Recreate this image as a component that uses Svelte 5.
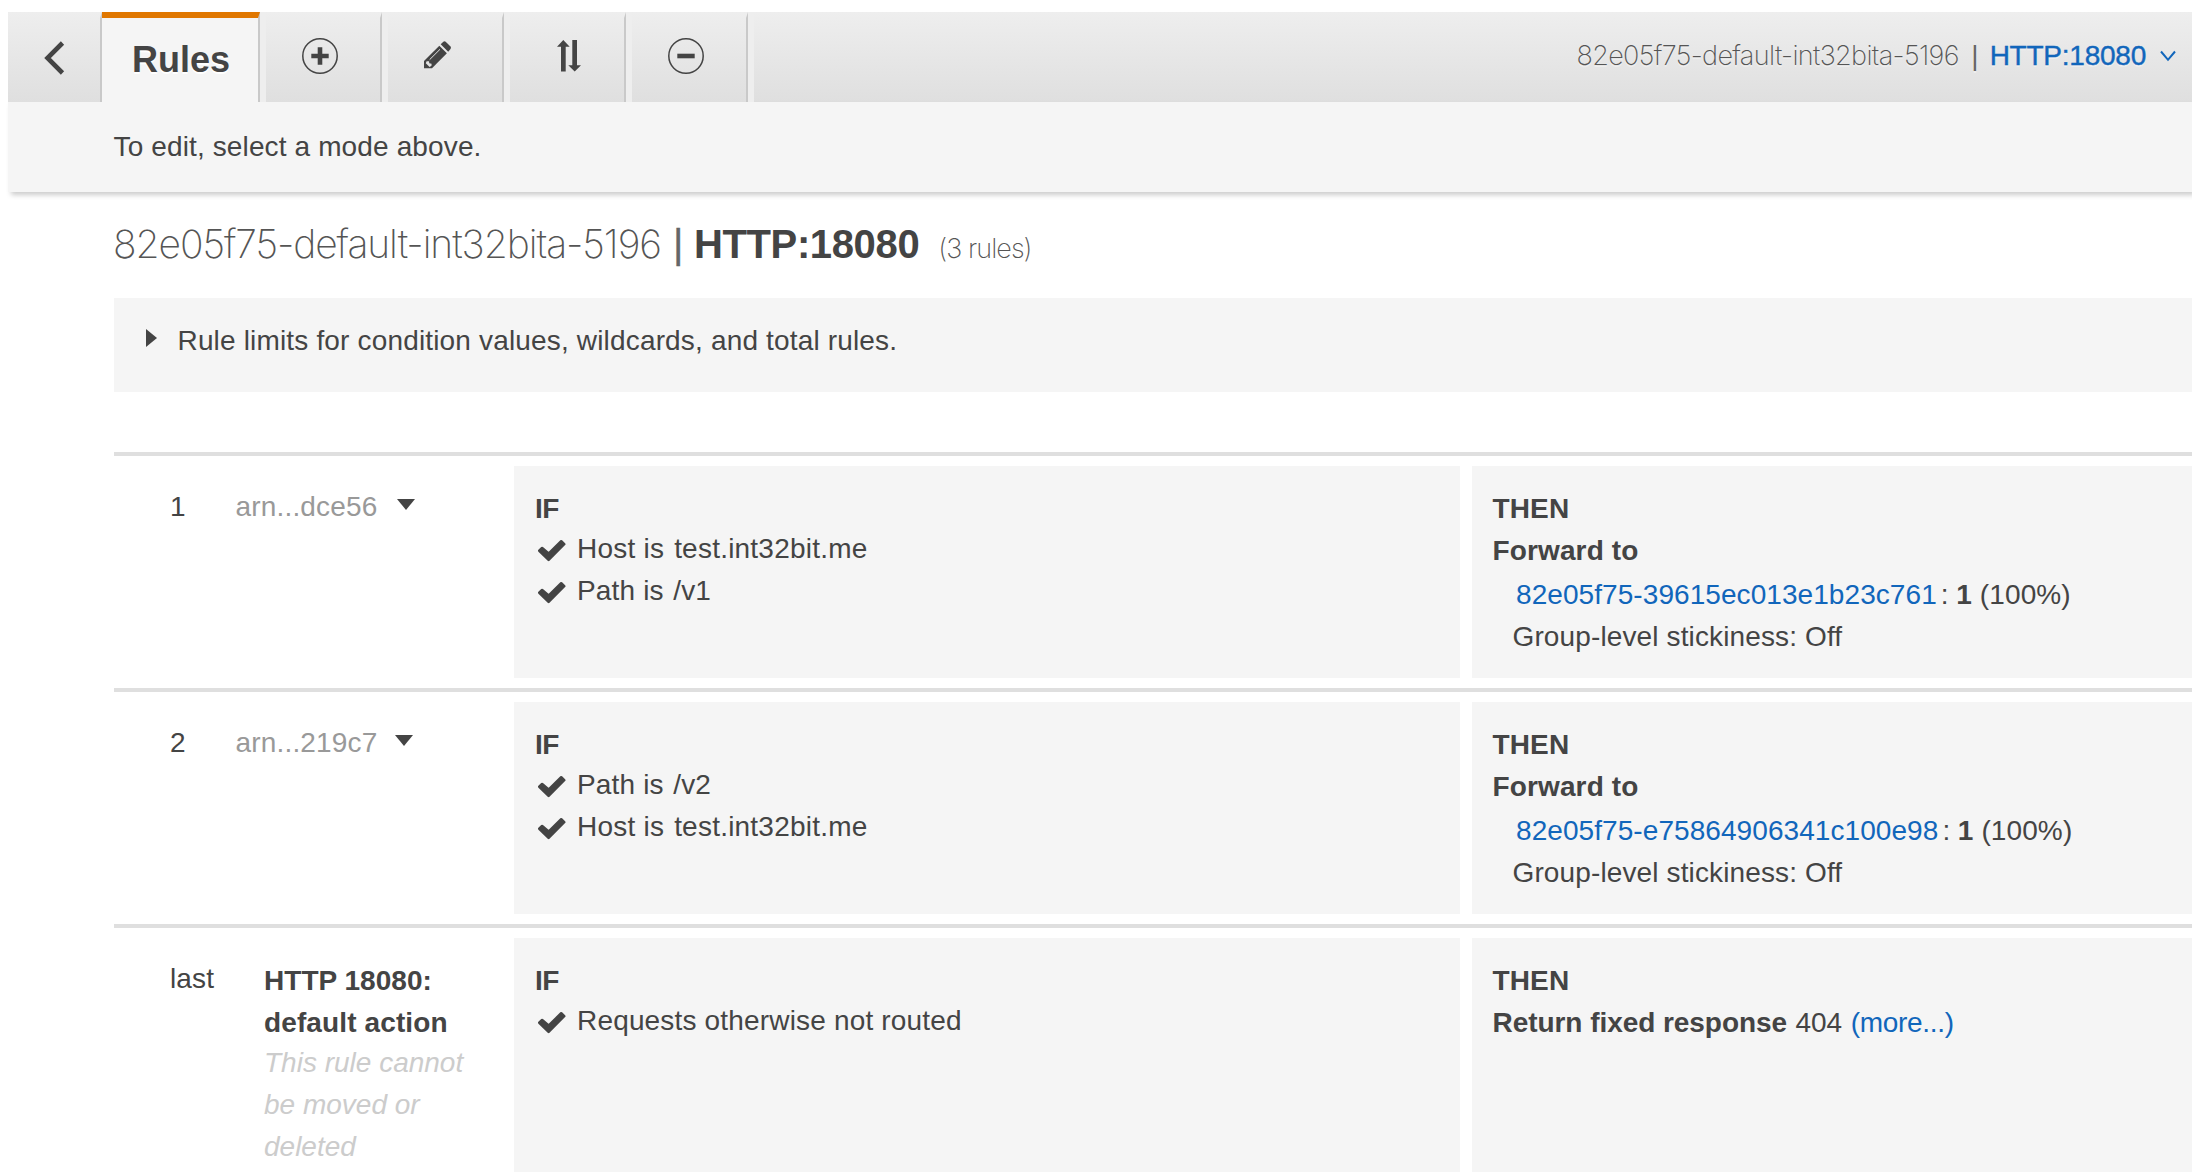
<script>
  const loadBalancer = '82e05f75-default-int32bita-5196';
  const listener = 'HTTP:18080';

  const rules = [
    {
      order: '1',
      arn: 'arn...dce56',
      conditions: [
        { label: 'Host is', value: 'test.int32bit.me', kind: 'host' },
        { label: 'Path is', value: '/v1', kind: 'path' }
      ],
      target: '82e05f75-39615ec013e1b23c761'
    },
    {
      order: '2',
      arn: 'arn...219c7',
      conditions: [
        { label: 'Path is', value: '/v2', kind: 'path' },
        { label: 'Host is', value: 'test.int32bit.me', kind: 'host' }
      ],
      target: '82e05f75-e75864906341c100e98'
    }
  ];
</script>

{#snippet check()}
  <svg class="check" viewBox="0 0 28 22" aria-hidden="true">
    <path d="M1.3 10.7 4.1 8 10.6 13.6 23.2 1.3 26.2 4.2 10.6 19.8Z" />
  </svg>
{/snippet}

<div class="page">
  <header class="toolbar">
    <nav class="tabs">
      <div class="tab back">
        <svg width="20" height="34" viewBox="0 0 20 34"><path d="M17.5 2 2.5 17l15 15" /></svg>
      </div>
      <div class="tab active">Rules</div>
      <div class="tab tool">
        <svg width="36" height="36" viewBox="0 0 36 36">
          <circle cx="18" cy="18" r="17.2" />
          <path class="bar" d="M9.3 18h17.4M18 9.3v17.4" />
        </svg>
      </div>
      <div class="tab tool pencil">
        <svg width="28" height="28" viewBox="0 0 28 28">
          <path class="fill" d="M0 20 15.3 4.7 22.9 12.2 8 27.3H0Z" />
          <path class="fill" d="M16.7 3.3 19.3.8q1.2-1 2.4 0L26.5 5.4q1 1.2 0 2.5L24.2 10.8Z" />
          <path class="light" d="M5.6 18.7 16 8.3" />
          <path class="cut" d="M2.6 20.2 5 20.3 5.3 22.3 7.6 22.7 7.5 24.8 5.6 26 1.8 22.2Z" />
        </svg>
      </div>
      <div class="tab tool sort">
        <svg width="24" height="32" viewBox="0 0 24 32">
          <path class="fill" d="M6.3 0 12.7 6.8H8.7V31.6H4V6.8H0Z" />
          <path class="fill" d="M17.7 31.6 11.3 25.2H15.3V0H20V25.2H24Z" />
        </svg>
      </div>
      <div class="tab tool">
        <svg width="36" height="36" viewBox="0 0 36 36">
          <circle cx="18" cy="18" r="17.2" />
          <path class="bar" d="M9.3 18h17.4" />
        </svg>
      </div>
    </nav>
    <div class="context">
      <span class="lb">{loadBalancer}</span>
      <span class="sep">|</span>
      <a class="listener">{listener}</a>
      <svg width="16" height="12" viewBox="0 0 16 12"><path d="M1 1.5 8 9.8 15 1.5" /></svg>
    </div>
  </header>

  <div class="hint">To edit, select a mode above.</div>

  <main>
    <h1>
      <span class="lb">{loadBalancer}</span>
      <span class="sep">|</span>
      <strong>{listener}</strong>
      <span class="count">(3 rules)</span>
    </h1>

    <div class="limits">
      <svg width="11" height="18" viewBox="0 0 11 18"><path d="M0 0 11 9 0 18Z" /></svg>
      <span>Rule limits for condition values, wildcards, and total rules.</span>
    </div>

    {#each rules as rule}
      <section class="rule">
        <div class="order">{rule.order}</div>
        <div class="name arn">
          <span>{rule.arn}</span>
          <svg width="18" height="11" viewBox="0 0 18 11"><path d="M0 0H18L9 11Z" /></svg>
        </div>
        <div class="box if">
          <b class="word-if">IF</b>
          <ul>
            {#each rule.conditions as c}
              <li class={c.kind}>{@render check()}<span>{c.label} <span class="value">{c.value}</span></span></li>
            {/each}
          </ul>
        </div>
        <div class="box then">
          <b>THEN</b>
          <b>Forward to</b>
          <div class="target"><a>{rule.target}</a><span class="colon">:</span><b>1</b><span class="share">(100%)</span></div>
          <div class="sticky">Group-level stickiness: Off</div>
        </div>
      </section>
    {/each}

    <section class="rule last">
      <div class="order">last</div>
      <div class="name default">
        <b class="tight">HTTP 18080:</b>
        <b class="wide">default action</b>
        <i>This rule cannot<br />be moved or<br />deleted</i>
      </div>
      <div class="box if">
        <b class="word-if">IF</b>
        <ul><li>{@render check()}<span>Requests otherwise not routed</span></li></ul>
      </div>
      <div class="box then">
        <b>THEN</b>
        <div class="fixed"><b>Return fixed response</b><span>404</span><a>(more...)</a></div>
      </div>
    </section>
  </main>
</div>

<style>
  :global(body) {
    overflow: hidden;
    background: #fff;
  }

  .page {
    height: 1172px;
    overflow: hidden;
    box-sizing: border-box;
    padding: 12px 0 0 8px;
    font: 28px/42px 'Liberation Sans', Arial, sans-serif;
    letter-spacing: 0.13px;
    color: #444;
  }

  a {
    color: #1166bb;
  }

  b {
    display: block;
  }

  .toolbar {
    display: flex;
    justify-content: space-between;
    height: 90px;
    background: linear-gradient(#eee, #dfdfdf);
  }

  .tabs {
    display: flex;
    gap: 6px;
    background: #eee;
  }

  .tabs::after {
    content: '';
  }

  .tab {
    box-sizing: border-box;
    display: flex;
    align-items: center;
    justify-content: center;
    width: 116px;
    border-top: 6px solid transparent;
    border-right: 2px solid #c9c9c9;
    background: linear-gradient(#eee, #dfdfdf) border-box;
  }

  .tab svg {
    display: block;
    overflow: visible;
    fill: none;
    stroke: #444;
    stroke-width: 1.5;
  }

  .tab .bar {
    stroke-width: 4.6;
  }

  .tab .fill {
    fill: #444;
    stroke: none;
  }

  .tab .light {
    stroke: #e6e6e6;
    stroke-width: 1;
  }

  .tab .cut {
    fill: #e2e2e2;
    stroke: none;
  }

  .tool {
    padding: 0 6px 8px 0;
  }

  .pencil {
    padding: 0 15px 11px 0;
  }

  .sort {
    padding: 0 0 9px 4px;
  }

  .back {
    width: 94px;
    margin-right: -6px;
    padding: 0 0 4px 2px;
  }

  .tab.back svg {
    stroke-width: 4.6;
  }

  .active {
    justify-content: flex-start;
    width: 158px;
    padding-left: 30px;
    border-top-color: #e07700;
    background: #f5f5f5;
    font-size: 36px;
    font-weight: 700;
    letter-spacing: 0;
    text-shadow: 0 2px 0 #fff;
  }

  .context {
    display: flex;
    align-items: baseline;
    padding: 23px 16px 0 0;
    text-shadow: 0 2px 0 #eee;
    white-space: nowrap;
  }

  .context svg {
    align-self: flex-start;
    margin: 15px 0 0 14px;
    fill: none;
    stroke: #1166bb;
    stroke-width: 2;
  }

  .lb,
  .count {
    font-family: Inter, sans-serif;
    font-weight: 200;
    color: #555;
  }

  .context .lb {
    font-size: 27px;
    letter-spacing: -0.64px;
  }

  .sep {
    color: #666;
    letter-spacing: 0;
  }

  .context .sep {
    margin: 0 11px 0 12.6px;
  }

  .listener {
    letter-spacing: -0.24px;
    -webkit-text-stroke: 0.4px #1166bb;
  }

  .hint {
    height: 90px;
    box-sizing: border-box;
    padding: 24px 0 0 105.5px;
    background: #f5f5f5;
    box-shadow: 3px 3px 5px #ccc;
  }

  main {
    padding-left: 106px;
  }

  h1 {
    display: flex;
    align-items: baseline;
    height: 62px;
    margin: 0 0 22px -1px;
    padding-top: 22px;
    font-size: 40px;
    font-weight: 400;
    line-height: 60px;
    white-space: nowrap;
  }

  h1 .lb {
    font-size: 39px;
    letter-spacing: -1.06px;
  }

  h1 .sep {
    margin: 0 10.5px 0 12px;
    -webkit-text-stroke: 0.4px #666;
  }

  h1 strong {
    letter-spacing: -0.36px;
  }

  h1 .count {
    margin-left: 19px;
    font-size: 27px;
    letter-spacing: -0.95px;
  }

  .limits {
    display: flex;
    box-sizing: border-box;
    height: 94px;
    margin-bottom: 60px;
    padding: 22px 0 0 32px;
    background: #f5f5f5;
    letter-spacing: 0.165px;
  }

  .limits svg {
    margin: 9px 20.5px 0 0;
    fill: #444;
  }

  .rule {
    display: grid;
    grid-template-columns: 121px 279px 946px 1fr;
    box-sizing: border-box;
    height: 236px;
    border-top: 4px solid #dfdfdf;
    padding: 10px 0;
  }

  .order {
    padding: 20px 0 0 56px;
  }

  .arn {
    display: flex;
    padding: 20px 0 0 0.5px;
    color: #999;
    letter-spacing: 0.17px;
  }

  .arn svg {
    margin: 13px 0 0 19.5px;
    fill: #444;
  }

  .rule:nth-of-type(2) .arn svg {
    margin-left: 17.5px;
  }

  .default {
    padding: 22px 0 0 29px;
  }

  .default i {
    display: block;
    margin-top: -2px;
    color: #ccc;
    letter-spacing: 0;
  }

  .tight {
    letter-spacing: 0.026px;
  }

  .wide {
    letter-spacing: 0.12px;
  }

  .box {
    height: 212px;
    box-sizing: border-box;
    padding: 22px 0 0 21px;
    background: #f5f5f5;
  }

  .then {
    margin-left: 12px;
    padding-left: 20.5px;
  }

  .word-if {
    letter-spacing: -0.5px;
  }

  ul {
    margin: -2px 0 0;
    padding: 0;
    list-style: none;
  }

  li {
    display: flex;
    letter-spacing: 0.17px;
  }

  .host {
    letter-spacing: 0.22px;
  }

  .host .value {
    margin-left: 2px;
  }

  .path .value {
    margin-left: 1.5px;
  }

  .check {
    width: 28px;
    height: 22px;
    margin: 12px 11px 0 3px;
    fill: #444;
    stroke: #444;
    stroke-width: 2.6;
    stroke-linejoin: round;
  }

  .target {
    display: flex;
    margin-top: 2px;
    padding-left: 23.5px;
    letter-spacing: 0.07px;
  }

  .colon {
    margin-left: 4px;
  }

  .target b {
    margin-left: 7.5px;
  }

  .share {
    margin-left: 8px;
    letter-spacing: 0.11px;
  }

  .sticky {
    padding-left: 20px;
  }

  .fixed {
    display: flex;
    letter-spacing: -0.05px;
  }

  .fixed span {
    margin: 0 8.5px;
  }

  .fixed a {
    letter-spacing: -0.3px;
  }

  .last .box {
    height: 240px;
  }
</style>
